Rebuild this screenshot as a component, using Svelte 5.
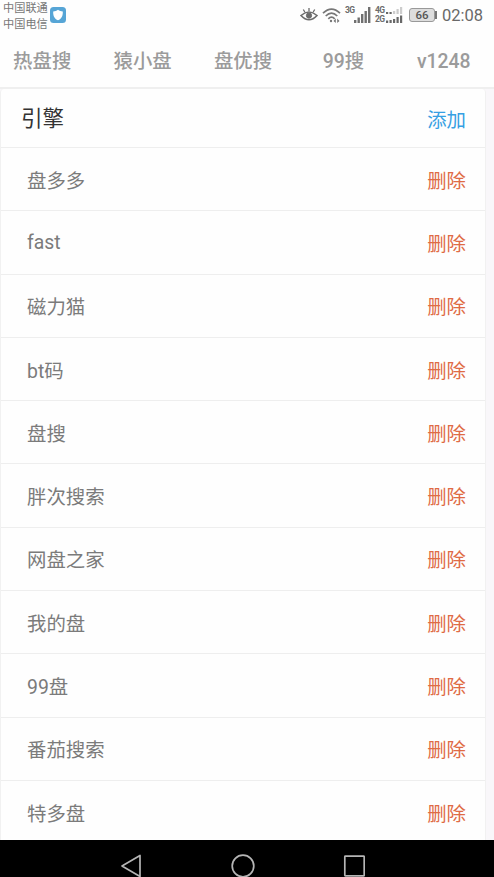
<script lang="ts">
    type Engine = { name: string }

    const tabs = ['热盘搜', '猿小盘', '盘优搜', '99搜', 'v1248']

    let engines: Engine[] = [
        { name: '盘多多' },
        { name: 'fast' },
        { name: '磁力猫' },
        { name: 'bt码' },
        { name: '盘搜' },
        { name: '胖次搜索' },
        { name: '网盘之家' },
        { name: '我的盘' },
        { name: '99盘' },
        { name: '番茄搜索' },
        { name: '特多盘' }
    ]

    function add() {
        engines = [...engines, { name: '盘搜' }]
    }
    function remove(i: number) {
        engines = engines.filter((_, n) => n !== i)
    }
</script>

<div class="phone">
    <header class="status">
        <div class="carriers">
            <span>中国联通</span>
            <span>中国电信</span>
        </div>
        <svg class="shield" width="16" height="16" viewBox="0 0 16 16">
            <rect width="16" height="16" rx="3.5" fill="#56a5d6" />
            <path d="M8 2.8 C9.5 4 11 4.3 12.8 4.4 C13 9 11.5 11.8 8 13.2 C4.5 11.8 3 9 3.2 4.4 C5 4.3 6.5 4 8 2.8Z" fill="#fff" />
        </svg>
        <div class="icons">
            <svg class="eye" width="18" height="16" viewBox="0 0 18 16" fill="none" stroke="#6c6c6c">
                <path d="M1 9.5 Q9 2.5 17 9.5 Q9 18 1 9.5Z" stroke-width="1.6" />
                <circle cx="9" cy="9.6" r="2.6" fill="#6c6c6c" />
                <path d="M9 5V2M4.8 6L3.3 3.5M13.2 6L14.7 3.5" stroke-width="1.3" />
            </svg>
            <svg class="wifi" width="20" height="17" viewBox="0 0 20 17" fill="none" stroke="#777" stroke-width="1.7">
                <path d="M1 6.2 Q9.5 -2 18 6.2M3.7 9 Q9.5 3.4 15.3 9M6.3 11.8 Q9.5 8.5 12.7 11.8" />
                <circle cx="9" cy="14" r="1.2" fill="#777" stroke="none" />
                <path d="M13.8 11.5v4.5l-2.3-2zM15.2 11.5v4.5l2.3-2z" fill="#777" stroke="none" />
            </svg>
            <span class="net">3G</span>
            <svg class="bars" width="17" height="16" viewBox="0 0 17 16" fill="#707070">
                <rect x="0" y="13" width="2.4" height="3" />
                <rect x="3.5" y="10.5" width="2.4" height="5.5" />
                <rect x="7" y="7" width="2.4" height="9" />
                <rect x="10.5" y="4" width="2.4" height="12" />
                <rect x="14" y="0" width="2.4" height="16" />
            </svg>
            <div class="dual">
                <span>4G</span>
                <span>2G</span>
            </div>
            <svg class="dualbars" width="17" height="16" viewBox="0 0 17 16" fill="#686868">
                <path d="M0 5h2.2v2H0zM3.5 5h2.2v2H3.5zM0 13.5h2.2V16H0zM3.5 13h2.2v3H3.5zM7 12h2.2v4H7zM10.5 10h2.2v6h-2.2zM14 8.5h2.2V16H14z" />
                <path d="M7 4h2.2v3H7zM10.5 2h2.2v5h-2.2zM14 0h2.2v7H14z" fill="#ccc" />
            </svg>
            <div class="battery">66</div>
            <i class="cap"></i>
            <span class="time">02:08</span>
        </div>
    </header>

    <nav>
        {#each tabs as tab}
            <span>{tab}</span>
        {/each}
    </nav>

    <main>
        <section class="card">
            <div class="row head">
                <h2>引擎</h2>
                <button class="add" on:click={add}>添加</button>
            </div>
            {#each engines as engine, i}
                <div class="row">
                    <span>{engine.name}</span>
                    <button on:click={() => remove(i)}>删除</button>
                </div>
            {/each}
        </section>
    </main>

    <footer>
        <svg width="22" height="24" viewBox="0 0 22 24"><path d="M20 1.5V22.5L2 12Z" /></svg>
        <svg width="24" height="24" viewBox="0 0 24 24"><circle cx="12" cy="12" r="10.8" /></svg>
        <svg width="22" height="24" viewBox="0 0 22 24"><rect x="1.8" y="2.2" width="19.4" height="19.6" rx=".6" /></svg>
    </footer>
</div>

<style>
    :global(body) {
        overflow: hidden;
        font-family: Roboto, "Noto Sans CJK SC", sans-serif;
    }
    .phone {
        display: flex;
        flex-direction: column;
        height: 877px;
        background: #fefefe;
        overflow: hidden;
    }
    .status {
        display: flex;
        flex: none;
        height: 32px;
        box-sizing: border-box;
        padding-left: 3px;
        color: #6c6c6c;
    }
    .carriers {
        display: flex;
        flex-direction: column;
        width: 47px;
        padding-top: 1px;
        font-size: 11.2px;
        line-height: 15.5px;
        color: #777;
    }
    .shield {
        margin-top: 7px;
    }
    .icons {
        display: flex;
        margin-left: auto;
        padding-right: 10px;
    }
    .eye {
        margin: 6px 4px 0 0;
    }
    .wifi {
        margin: 7px 3px 0 0;
    }
    .net, .dual {
        font-size: 8.5px;
        font-weight: 700;
        line-height: 9px;
        letter-spacing: -0.7px;
    }
    .net {
        width: 9px;
        margin-top: 6px;
    }
    .bars {
        margin: 7px 4px 0 0;
    }
    .dual {
        display: flex;
        flex-direction: column;
        width: 11px;
        margin-top: 6px;
    }
    .dualbars {
        margin: 7px 6px 0 0;
    }
    .battery {
        width: 26px;
        height: 14px;
        margin-top: 8px;
        box-sizing: border-box;
        border: 1px solid #999;
        border-radius: 3px;
        background: #ddd;
        font-size: 11.5px;
        font-weight: 500;
        line-height: 13px;
        text-align: center;
        color: #555;
    }
    .cap {
        width: 2px;
        height: 8px;
        margin: 11px 5px 0 0;
        background: #777;
    }
    .time {
        width: 42px;
        font-size: 16.5px;
        line-height: 32px;
        color: #696969;
    }
    nav {
        display: grid;
        grid-template-columns: repeat(5, 1fr);
        flex: none;
        height: 55px;
        margin-left: -8px;
        border-bottom: 2px solid #efefef;
        font-size: 19.4px;
        font-weight: 500;
        line-height: 59px;
        text-align: center;
        color: #9b9b9b;
    }
    nav span {
        white-space: nowrap;
    }
    main {
        flex: 1;
        min-height: 0;
        overflow: hidden;
        padding-right: 8px;
        background: #f9f7fa;
    }
    .card {
        box-sizing: border-box;
        border: 1px solid #f1f1f1;
        border-top: none;
        border-radius: 4px;
        background: #fefefe;
    }
    .row {
        display: flex;
        align-items: center;
        justify-content: space-between;
        height: 63.3px;
        box-sizing: border-box;
        padding: 0 19px 0 26px;
        border-bottom: 1px solid #eee;
        font-size: 19.4px;
        color: #7b7b7b;
    }
    .head {
        height: 59px;
        padding: 0 19px 0 20px;
    }
    h2 {
        margin: -3px 0 0;
        font-size: 21.5px;
        font-weight: 400;
        color: #333;
    }
    button {
        padding: 0;
        border: none;
        background: none;
        font: inherit;
        color: #df6b45;
    }
    .add {
        color: #36a0e3;
    }
    footer {
        display: flex;
        flex: none;
        justify-content: space-between;
        height: 37px;
        box-sizing: border-box;
        padding: 14px 129px 0 120px;
        background: #000;
    }
    footer svg {
        flex: none;
        fill: none;
        stroke: #b5b5b5;
        stroke-width: 1.7;
        stroke-linejoin: round;
    }
</style>
